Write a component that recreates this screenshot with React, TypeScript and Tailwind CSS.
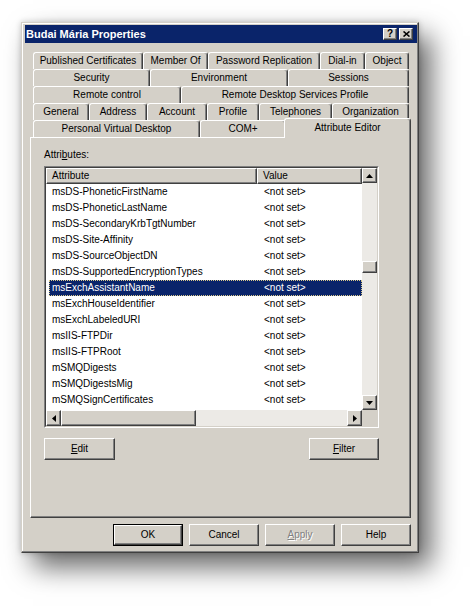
import React from "react"

const raised =
  "border border-t-white border-l-white border-r-[#404040] border-b-[#404040] shadow-[inset_-1px_-1px_#808080] bg-[#D4D0C8]"

const TAB_ROWS = [
  [
    { label: "Published Certificates", w: "w-[110px]" },
    { label: "Member Of", w: "w-[65px]" },
    { label: "Password Replication", w: "w-[112px]" },
    { label: "Dial-in", w: "w-[45px]" },
    { label: "Object", w: "w-[44px]" },
  ],
  [
    { label: "Security", w: "w-[117px]" },
    { label: "Environment", w: "w-[138px]" },
    { label: "Sessions", w: "w-[121px]" },
  ],
  [
    { label: "Remote control", w: "w-[148px]" },
    { label: "Remote Desktop Services Profile", w: "w-[228px]" },
  ],
  [
    { label: "General", w: "w-[56px]" },
    { label: "Address", w: "w-[58px]" },
    { label: "Account", w: "w-[60px]" },
    { label: "Profile", w: "w-[52px]" },
    { label: "Telephones", w: "w-[73px]" },
    { label: "Organization", w: "w-[77px]" },
  ],
]

const ATTRS = [
  "msDS-PhoneticFirstName",
  "msDS-PhoneticLastName",
  "msDS-SecondaryKrbTgtNumber",
  "msDS-Site-Affinity",
  "msDS-SourceObjectDN",
  "msDS-SupportedEncryptionTypes",
  "msExchAssistantName",
  "msExchHouseIdentifier",
  "msExchLabeledURI",
  "msIIS-FTPDir",
  "msIIS-FTPRoot",
  "mSMQDigests",
  "mSMQDigestsMig",
  "mSMQSignCertificates",
  "mSMQSignCertificatesMig",
]

function Tab({ label, w }: { label: string; w: string }) {
  return (
    <div
      className={`${w} h-[17px] flex items-center justify-center border-t border-l border-r border-t-white border-l-white border-r-[#404040] rounded-t-[3px] shadow-[inset_-1px_0_#808080] bg-[#D4D0C8] whitespace-nowrap`}
    >
      {label}
    </div>
  )
}

function Arrow({ dir }: { dir: "up" | "down" | "left" | "right" }) {
  const d = {
    up: "M3.5 0L7 4H0z",
    down: "M0 0h7L3.5 4z",
    left: "M4 0v7L0 3.5z",
    right: "M0 0l4 3.5L0 7z",
  }[dir]
  const horiz = dir === "left" || dir === "right"
  return (
    <svg width={horiz ? 4 : 7} height={horiz ? 7 : 4} viewBox={horiz ? "0 0 4 7" : "0 0 7 4"}>
      <path d={d} fill="#000" />
    </svg>
  )
}

function Btn({ children, className = "" }: { children: React.ReactNode; className?: string }) {
  return (
    <div className={`${raised} w-[70px] h-[22px] flex items-center justify-center ${className}`}>{children}</div>
  )
}

export default function App() {
  return (
    <div className="w-[474px] h-[609px] bg-white overflow-hidden font-['Liberation_Sans',Arial,sans-serif] text-[10px] leading-[12px] text-black">
      {/* window */}
      <div className="ml-[21px] mt-[22px] w-[398px] h-[531px] flex flex-col bg-[#D4D0C8] border border-t-[#D4D0C8] border-l-[#D4D0C8] border-r-[#404040] border-b-[#404040] shadow-[inset_-1px_-1px_#808080,inset_1px_1px_#ffffff,12px_14px_26px_rgba(0,0,0,0.6),0_0_6px_rgba(0,0,0,0.2)] pt-[2px] pl-[3px] pr-[1px]">
        {/* title bar */}
        <div className="h-[18px] bg-[#0A246A] flex items-center pl-[1px] pr-[4px]">
          <span className="text-white font-bold text-[11px] leading-[14px]">Budai Mária Properties</span>
          <div className="ml-auto flex gap-[2px]">
            <div className={`${raised} w-[14px] h-[12px] flex items-center justify-center font-bold text-[10px] leading-[10px]`}>?</div>
            <div className={`${raised} w-[14px] h-[12px] flex items-center justify-center`}>
              <svg width="7" height="6" viewBox="0 0 7 6">
                <path d="M0.5 0.5L6.5 5.5M6.5 0.5L0.5 5.5" stroke="#000" strokeWidth="1.6" />
              </svg>
            </div>
          </div>
        </div>

        {/* tabs */}
        <div className="mt-[9px] ml-[5px] w-[381px]">
          {TAB_ROWS.map((row, i) => (
            <div key={i} className="flex h-[17px] pl-[3px]">
              {row.map((t) => (
                <Tab key={t.label} label={t.label} w={t.w} />
              ))}
            </div>
          ))}
          <div className="flex h-[17px] pl-[3px]">
            <Tab label="Personal Virtual Desktop" w="w-[167px]" />
            <Tab label="COM+" w="w-[86px]" />
            <div className="relative z-10 -ml-[2px] -mt-[2px] w-[127px] h-[20px] flex justify-center pt-[3px] border-t border-l border-r border-t-white border-l-white border-r-[#404040] rounded-t-[3px] shadow-[inset_-1px_0_#808080] bg-[#D4D0C8]">
              Attribute Editor
            </div>
          </div>

          {/* panel */}
          <div className="h-[381px] border border-t-white border-l-white border-r-[#404040] border-b-[#404040] shadow-[inset_-1px_-1px_#808080] pt-[11px] pl-[13px]">
            <div>
              Attri<span className="underline">b</span>utes:
            </div>
            <div className="mt-[5px] w-[335px] h-[262px] border border-t-[#808080] border-l-[#808080] border-r-white border-b-white">
              <div className="h-full border border-t-[#404040] border-l-[#404040] border-r-[#D4D0C8] border-b-[#D4D0C8] flex flex-col bg-white">
                <div className="flex h-[242px]">
                  <div className="w-[316px] flex flex-col">
                    <div className="flex h-[16px] shrink-0">
                      <div className={`${raised} w-[211px] pl-[5px] flex items-center`}>Attribute</div>
                      <div className={`${raised} w-[105px] pl-[5px] flex items-center`}>Value</div>
                    </div>
                    <div className="h-[226px] overflow-hidden">
                      {ATTRS.map((a, i) => (
                        <div
                          key={a}
                          className={`ml-[3px] w-[313px] h-[16px] flex items-center ${
                            i === 6
                              ? "bg-[#0A246A] text-white outline-1 outline-dotted outline-[#d9c98a] -outline-offset-1"
                              : ""
                          }`}
                        >
                          <div className="w-[208px] pl-[3px] whitespace-nowrap overflow-hidden">{a}</div>
                          <div className="w-[105px] pl-[7px] whitespace-nowrap">&lt;not set&gt;</div>
                        </div>
                      ))}
                    </div>
                  </div>
                  {/* vertical scrollbar */}
                  <div className="w-[15px] flex flex-col bg-[#ECEAE6]">
                    <div className={`${raised} h-[15px] flex items-center justify-center`}>
                      <Arrow dir="up" />
                    </div>
                    <div className="flex-1">
                      <div className={`${raised} mt-[78px] h-[12px]`} />
                    </div>
                    <div className={`${raised} h-[15px] flex items-center justify-center`}>
                      <Arrow dir="down" />
                    </div>
                  </div>
                </div>
                {/* horizontal scrollbar */}
                <div className="flex h-[16px] bg-[#ECEAE6]">
                  <div className={`${raised} w-[15px] flex items-center justify-center`}>
                    <Arrow dir="left" />
                  </div>
                  <div className={`${raised} w-[135px]`} />
                  <div className="flex-1" />
                  <div className={`${raised} w-[15px] flex items-center justify-center`}>
                    <Arrow dir="right" />
                  </div>
                  <div className="w-[15px] bg-[#D4D0C8]" />
                </div>
              </div>
            </div>
            <div className="mt-[10px] w-[335px] flex justify-between">
              <Btn className="w-[71px]">
                <span>
                  <span className="underline">E</span>dit
                </span>
              </Btn>
              <Btn className="w-[70px]">
                <span>
                  <span className="underline">F</span>ilter
                </span>
              </Btn>
            </div>
          </div>
        </div>

        {/* dialog buttons */}
        <div className="mt-[6px] mr-[6px] flex justify-end gap-[6px]">
          <div className="w-[70px] h-[22px] border border-black">
            <div className={`${raised} h-full flex items-center justify-center`}>OK</div>
          </div>
          <Btn>Cancel</Btn>
          <Btn>
            <span className="text-[#808080] [text-shadow:1px_1px_0_#ffffff]">
              <span className="underline">A</span>pply
            </span>
          </Btn>
          <Btn>Help</Btn>
        </div>
      </div>
    </div>
  )
}
